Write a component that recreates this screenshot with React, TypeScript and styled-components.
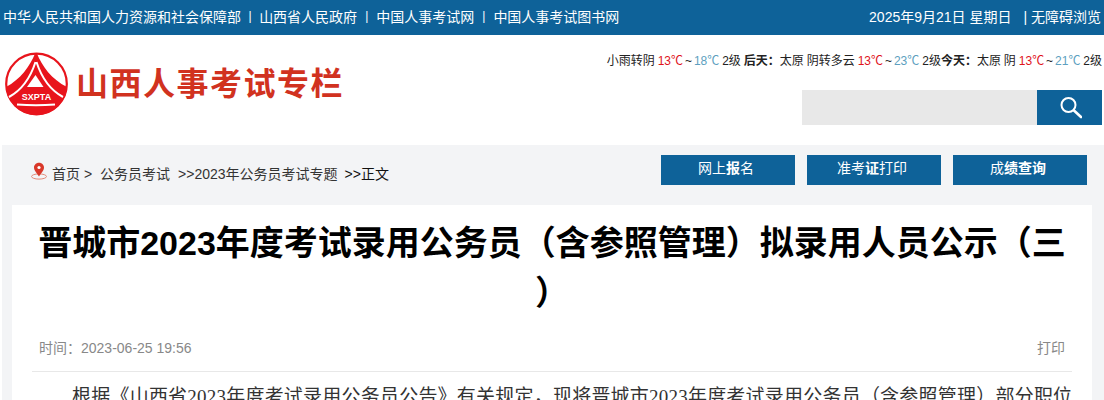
import React from 'react';
import styled, {createGlobalStyle} from 'styled-components';

const GlobalStyle = createGlobalStyle`
    html, body {
        margin: 0;
        padding: 0;
        background: #fff;
        overflow: hidden;
    }

    body {
        font-family: "Liberation Sans", "Noto Sans CJK SC", sans-serif;
        color: #333;
    }
`;

const Page = styled.div`
    width: 1104px;
    height: 400px;
    overflow: hidden;
`;

const TopBar = styled.div`
    height: 35px;
    background: #0e6299;
    color: #fff;
    font-size: 14px;
    display: flex;
    justify-content: space-between;
    align-items: center;
    padding: 0 3px 3px;
    box-sizing: border-box;
`;

const TopLinks = styled.div`
    display: flex;
    align-items: center;
`;

const Sep = styled.span<{$tight?: boolean}>`
    margin: 0 ${(p) => (p.$tight ? '7.5px' : '8px')};
    font-size: 12px;
`;

const TopRight = styled.div`
    display: flex;
    align-items: center;
`;

const Accessible = styled.span`
    margin-left: 12px;
`;

const Header = styled.div`
    height: 110px;
    display: flex;
    justify-content: space-between;
`;

const Brand = styled.div`
    display: flex;
    align-items: center;
    gap: 7px;
    padding: 17px 0 0 5px;
    height: 64px;
`;

const BrandName = styled.div`
    color: #d1321f;
    font-size: 32px;
    font-weight: 700;
    letter-spacing: 1.5px;
    white-space: nowrap;
    padding-bottom: 6px;
`;

const HeaderRight = styled.div`
    display: flex;
    flex-direction: column;
    align-items: flex-end;
    padding-right: 2px;
`;

const Weather = styled.div`
    margin-top: 18px;
    height: 16px;
    line-height: 16px;
    font-size: 12px;
    word-spacing: -0.4px;
    color: #222;
    white-space: nowrap;
`;

const Temp = styled.span<{$cold?: boolean}>`
    color: ${(p) => (p.$cold ? '#5d9fc0' : '#e0141c')};
`;

const Tilde = styled.span`
    margin: 0 -1px;
`;

const SearchBox = styled.div`
    margin-top: 21px;
    display: flex;
    width: 300px;
    height: 35px;
`;

const SearchInput = styled.div`
    flex: 1;
    background: #e8e8e8;
`;

const SearchButton = styled.div`
    width: 65px;
    background: #0e6299;
    display: flex;
    align-items: center;
    justify-content: center;
`;

const Main = styled.div`
    margin-left: 2px;
    background: #f3f4f6;
    height: 255px;
    padding: 0 12px 0 10px;
`;

const NavRow = styled.div`
    height: 60px;
    display: flex;
    justify-content: space-between;
    align-items: flex-start;
    padding-left: 19px;
`;

const Crumbs = styled.div`
    display: flex;
    align-items: center;
    height: 20px;
    margin-top: 18px;
    font-size: 14px;
    color: #333;
    white-space: nowrap;

    svg {
        margin-bottom: 4px;
    }
`;

const Crumb = styled.span<{$gap?: number; $dark?: boolean}>`
    margin-left: ${(p) => p.$gap ?? 0}px;
    color: ${(p) => (p.$dark ? '#111' : '#333')};
`;

const Buttons = styled.div`
    display: flex;
    gap: 12px;
    margin: 10px 5px 0 0;
`;

const NavButton = styled.div`
    width: 134px;
    height: 30px;
    box-sizing: border-box;
    padding-right: 4px;
    background: #0e6299;
    color: #fff;
    font-size: 14px;
    line-height: 27px;
    text-align: center;

    b {
        font-weight: 700;
    }
`;

const Card = styled.div`
    background: #fff;
    height: 195px;
    padding: 13px 20px 0;
`;

const Title = styled.h1`
    margin: 0;
    font-size: 34px;
    line-height: 50px;
    font-weight: 700;
    color: #000;
    text-align: center;
    line-break: anywhere;
`;

const Meta = styled.div`
    display: flex;
    justify-content: space-between;
    margin-top: 18px;
    padding: 0 7px;
    height: 24px;
    line-height: 24px;
    font-size: 14px;
    color: #888;
`;

const Article = styled.div`
    margin-top: 11px;
    border-top: 1px solid #e8e8e8;
    padding-top: 10px;
    font-family: "Liberation Serif", "Noto Sans CJK SC", serif;
    font-size: 19px;
    letter-spacing: 0.22px;
    line-height: 30px;
    color: #333;
    text-indent: 40px;
    white-space: nowrap;
`;

const Logo = () => (
    <svg
        width='64'
        height='66'
        viewBox='0 0 64 66'
    >
        <defs>
            <clipPath id='logo-disc'>
                <circle
                    cx='31.5'
                    cy='33'
                    r='31'
                />
            </clipPath>
        </defs>
        <circle
            cx='31.5'
            cy='33'
            r='30.3'
            fill='none'
            stroke='#e8141c'
            strokeWidth='2.2'
        />
        <path
            clipPath='url(#logo-disc)'
            fill='#e8141c'
            d='M31 0C26 14 16 28 1 36V66H62V36C46 28 36 14 31 0Z'
        />
        <path
            fill='none'
            stroke='#fff'
            strokeWidth='2'
            d='M4 46C15 40 25 28 30.5 11M58 46C47 40 37 28 31.5 11'
        />
        <path
            fill='#fff'
            d='M30.5 24L38.5 36H22Z'
        />
        <path
            fill='none'
            stroke='#fff'
            strokeWidth='2.2'
            d='M12 53.5Q31 55 50 53.5'
        />
        <text
            x='31.5'
            y='49'
            fill='#fff'
            fontFamily='Liberation Sans'
            fontSize='9'
            fontWeight='700'
            textAnchor='middle'
        >
            {'SXPTA'}
        </text>
    </svg>
);

const SearchIcon = () => (
    <svg
        width='25'
        height='25'
        viewBox='0 0 25 25'
        fill='none'
        stroke='#fff'
        strokeLinecap='round'
    >
        <circle
            cx='11.5'
            cy='10'
            r='7'
            strokeWidth='2'
        />
        <path
            d='M17 15.5L24 22'
            strokeWidth='2.6'
        />
    </svg>
);

const PinIcon = () => (
    <svg
        width='18'
        height='18'
        viewBox='0 0 18 18'
    >
        <ellipse
            cx='8'
            cy='14.5'
            rx='7.5'
            ry='2.6'
            fill='none'
            stroke='#e38a78'
            strokeWidth='1'
        />
        <path
            fill='#d9382a'
            d='M8 .7C5 .7 3 2.9 3 5.5C3 8.7 6.5 11.8 8 14.5C9.5 11.8 13 8.7 13 5.5C13 2.9 11 .7 8 .7Z'
        />
        <circle
            cx='8'
            cy='5.5'
            r='1.6'
            fill='#fff'
        />
    </svg>
);

const App = () => (
    <Page>
        <GlobalStyle/>
        <TopBar>
            <TopLinks>
                {'中华人民共和国人力资源和社会保障部'}
                <Sep $tight={true}>{'|'}</Sep>
                {'山西省人民政府'}
                <Sep>{'|'}</Sep>
                {'中国人事考试网'}
                <Sep>{'|'}</Sep>
                {'中国人事考试图书网'}
            </TopLinks>
            <TopRight>
                {'2025年9月21日 星期日'}
                <Accessible>{'| 无障碍浏览'}</Accessible>
            </TopRight>
        </TopBar>
        <Header>
            <Brand>
                <Logo/>
                <BrandName>{'山西人事考试专栏'}</BrandName>
            </Brand>
            <HeaderRight>
                <Weather>
                    {'小雨转阴 '}<Temp>{'13℃'}</Temp>{' '}<Tilde>{'~'}</Tilde>{' '}<Temp $cold={true}>{'18℃'}</Temp>{' 2级 '}
                    <b>{'后天：'}</b>{'太原 阴转多云 '}<Temp>{'13℃'}</Temp>{' '}<Tilde>{'~'}</Tilde>{' '}<Temp $cold={true}>{'23℃'}</Temp>{' 2级'}
                    <b>{'今天：'}</b>{'太原 阴 '}<Temp>{'13℃'}</Temp>{' '}<Tilde>{'~'}</Tilde>{' '}<Temp $cold={true}>{'21℃'}</Temp>{' 2级'}
                </Weather>
                <SearchBox>
                    <SearchInput/>
                    <SearchButton><SearchIcon/></SearchButton>
                </SearchBox>
            </HeaderRight>
        </Header>
        <Main>
            <NavRow>
                <Crumbs>
                    <PinIcon/>
                    <Crumb $gap={3}>{'首页 >'}</Crumb>
                    <Crumb $gap={8}>{'公务员考试'}</Crumb>
                    <Crumb $gap={8}>{'>>2023年公务员考试专题'}</Crumb>
                    <Crumb
                        $gap={7}
                        $dark={true}
                    >{'>>正文'}</Crumb>
                </Crumbs>
                <Buttons>
                    <NavButton>{'网上'}<b>{'报'}</b>{'名'}</NavButton>
                    <NavButton>{'准考'}<b>{'证'}</b>{'打印'}</NavButton>
                    <NavButton>{'成'}<b>{'绩查询'}</b></NavButton>
                </Buttons>
            </NavRow>
            <Card>
                <Title>{'晋城市2023年度考试录用公务员（含参照管理）拟录用人员公示（三）'}</Title>
                <Meta>
                    <span>{'时间：2023-06-25 19:56'}</span>
                    <span>{'打印'}</span>
                </Meta>
                <Article>{'根据《山西省2023年度考试录用公务员公告》有关规定，现将晋城市2023年度考试录用公务员（含参照管理）部分职位'}</Article>
            </Card>
        </Main>
    </Page>
);

export default App;
